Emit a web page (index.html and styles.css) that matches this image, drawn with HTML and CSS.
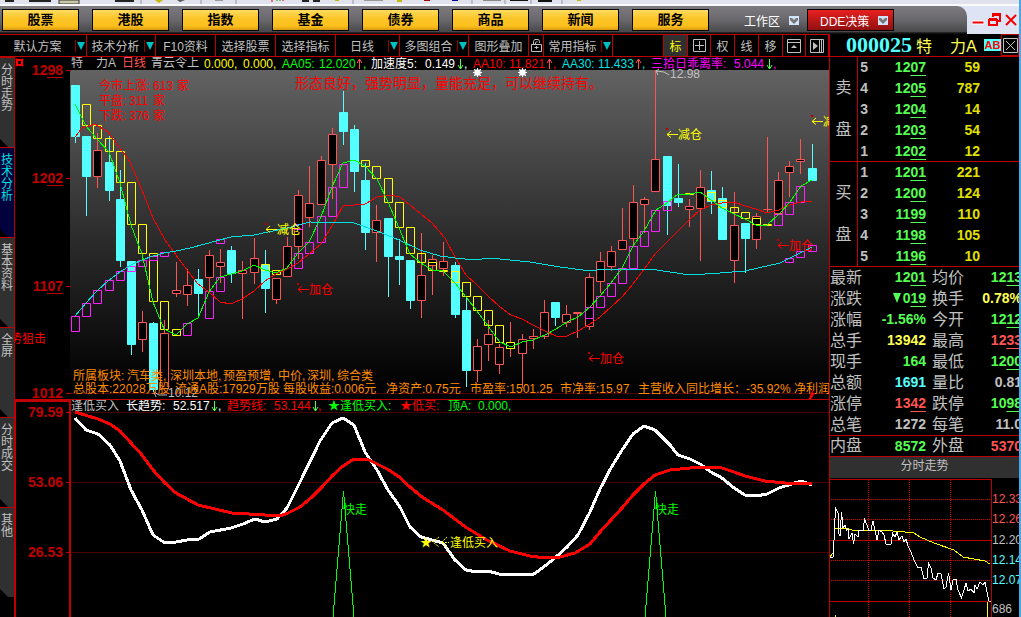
FILE: index.html
```
<!DOCTYPE html>
<html lang="zh-CN">
<head>
<meta charset="utf-8">
<title>000025 特力A</title>
<link rel="stylesheet" href="styles.css">
</head>
<body>
<div class="window">
  <header class="top">
    <div class="strip">
      <svg width="420" height="5" viewBox="0 0 420 5" aria-hidden="true">
        <path d="M5 0h9v2H5zM29 0h22v2H29zM115 0h19v2h-19z" fill="#222"/>
        <path d="M59 0h20v4H59z" fill="#c9c9a8" stroke="#333"/>
        <path d="M155 0h8l-4 3z" fill="#c8b800"/><path d="M177 0h8l-5 2z" fill="#555"/>
        <path d="M141 0v4M201 0v4M236 0v4M353 0v4" stroke="#999"/>
        <path d="M215 0h8v1h-8zM364 0h19v1h-19z" fill="#999"/>
        <path d="M272 0v2M283 0v1" stroke="#e00000"/><path d="M277 0v1M280 0v1" stroke="#00a000"/>
        <path d="M302 0h7v2h-7zM313 0h7v2h-7z" fill="#222"/><path d="M335 0h4v1h-4zM397 0h5v2h-5z" fill="#c8b800"/>
      </svg>
      <svg width="180" height="5" viewBox="0 0 180 5" aria-hidden="true">
        <path d="M4 0h6v1H4z" fill="#a00000"/><path d="M32 0h6v1h-6z" fill="#0000a0"/>
        <path d="M52 0v4M85 0v4M111 0v4M142 0v4" stroke="#999"/>
        <path d="M63 0h18v1H63z" fill="#888"/><path d="M90 0h18v1H90zM118 0h14v2h-14z" fill="#111"/>
        <path d="M157 0h4v1h-4z" fill="#c8b800"/>
      </svg>
    </div>
    <div class="nav-row">
      <nav class="nav">
        <button class="nav-btn">股票</button>
        <button class="nav-btn">港股</button>
        <button class="nav-btn">指数</button>
        <button class="nav-btn">基金</button>
        <button class="nav-btn">债券</button>
        <button class="nav-btn">商品</button>
        <button class="nav-btn">新闻</button>
        <button class="nav-btn">服务</button>
        <button class="menu-btn">工作区
          <svg width="10" height="9" viewBox="0 0 10 9" aria-hidden="true"><path d="M0 0h10v9H0z" fill="#cfe4fa"/><path d="M1 2h2l2 2 2-2h2v2L5 8 1 4z" fill="#777"/></svg>
        </button>
        <button class="menu-btn menu-red">DDE决策
          <svg width="10" height="9" viewBox="0 0 10 9" aria-hidden="true"><path d="M0 0h10v9H0z" fill="#cfe4fa"/><path d="M1 2h2l2 2 2-2h2v2L5 8 1 4z" fill="#777"/></svg>
        </button>
      </nav>
      <div class="win-controls">
        <button aria-label="最小化"><svg width="13" height="14" viewBox="0 0 13 14"><path d="M0 8h12v3H0z" fill="#f00000" stroke="#fff" stroke-width="1"/></svg></button>
        <button aria-label="还原"><svg width="14" height="14" viewBox="0 0 14 14"><path d="M5 4V2h7v6h-2M4 1h9M1 7h8v5H1zM1 6h8" fill="none" stroke="#f00000" stroke-width="2"/></svg></button>
        <button aria-label="关闭"><svg width="12" height="14" viewBox="0 0 12 14"><path d="M1 2l10 10M11 2L1 12" stroke="#f00000" stroke-width="2"/></svg></button>
      </div>
    </div>
  </header>

  <div class="work">
    <main class="main">
      <div class="toolbar">
        <button class="tool split w-86"><span>默认方案</span><i></i></button>
        <button class="tool split w-70"><span>技术分析</span><i></i></button>
        <button class="tool w-60">F10资料</button>
        <button class="tool w-60">选择股票</button>
        <button class="tool w-60">选择指标</button>
        <button class="tool split w-64"><span>日线</span><i></i></button>
        <button class="tool split w-70"><span>多图组合</span><i></i></button>
        <button class="tool w-60">图形叠加</button>
        <button class="tool w-15" aria-label="锁定"><svg width="11" height="15" viewBox="0 0 11 15"><path d="M.5 6.500h10v7H.5zM2.500 6V3.500l1-2h4l1 2V5M4.500 6V4.500l2-1M5.500 8v3M3.500 9.500h4" fill="none" stroke="#c0c0c0"/></svg></button>
        <button class="tool split w-70"><span>常用指标</span><i></i></button>
        <span class="spacer"></span>
        <button class="tool w-24 on">标</button>
        <button class="tool w-23" aria-label="十字"><svg width="13" height="13" viewBox="0 0 13 13"><path d="M.5 .5h12v12H.5zM6.500 2v9M2 6.500h9" fill="none" stroke="#c0c0c0"/></svg></button>
        <button class="tool w-24">权</button>
        <button class="tool w-24">线</button>
        <button class="tool w-24">移</button>
        <button class="tool w-23" aria-label="上翻"><svg width="14" height="14" viewBox="0 0 14 14"><path d="M.5 .5h13v13H.5zM0 3.500h14" fill="none" stroke="#c0c0c0"/><path d="M4 9l3-3 3 3z" fill="#c0c0c0"/></svg></button>
        <button class="tool w-23" aria-label="右移"><svg width="14" height="14" viewBox="0 0 14 14"><path d="M.5 .5h13v13H.5zM9.500 1v12M11.500 1v12" fill="none" stroke="#c0c0c0"/><path d="M3 3l5 4-5 4z" fill="#c0c0c0"/></svg></button>
      </div>
      <div class="body-row">
        <div class="tabs">
          <button class="tab"><span>分时走势</span></button>
          <button class="tab active"><span>技术分析</span></button>
          <button class="tab"><span>基本资料</span></button>
          <button class="tab"><span>全屏</span></button>
          <button class="tab"><span>分时成交</span></button>
          <button class="tab"><span>其他</span></button>
        </div>
        <div class="charts">
          <svg class="chart" viewBox="15 57 814 343">
            <defs>
              <linearGradient id="bg" x1="0" y1="0" x2="0" y2="1">
                <stop offset="0" stop-color="#626262"/><stop offset=".55" stop-color="#292929"/><stop offset="1" stop-color="#000"/>
              </linearGradient>
              <g id="dn"><path d="M2.500 -5v10" stroke="#54ff54"/><path d="M0 1l2.500 4L5 1" fill="none" stroke="#54ff54"/></g>
              <g id="up"><path d="M2.500 -5v10" stroke="#ff5454"/><path d="M0 -1l2.500 -4L5 -1" fill="none" stroke="#ff5454"/></g>
              <g id="mark"><path d="M0 .5h11M4 -3L0 .5l4 3" fill="none" stroke="currentColor"/><path d="M-1 -6h2v2h-2z" fill="#c00000"/></g>
            </defs>
            <rect x="70" y="70" width="759" height="320" fill="url(#bg)"/>
            <path d="M15 399.500h814" stroke="#c00000"/>
            <path d="M70 393.500h759" stroke="#500000"/>
            <path d="M66 70.500h5M66 178.500h5M66 286.500h5M66 393.500h5M47 77.500h16M47 185.500h16M47 293.500h16" stroke="#c00000"/>
            <path d="M17 60h5v5h-5zM16 59l1 1M23 59l-1 1M16 66l1-1M23 66l-1-1" fill="none" stroke="#ff0000" stroke-width="2"/>
            <g class="axis">
              <text x="63" y="75">1298</text><text x="63" y="183">1202</text><text x="63" y="291">1107</text><text x="63" y="398">1012</text>
            </g>
            <g class="txt">
              <text x="10" y="343" fill="#ff0000">势狙击</text>
              <text y="67" fill="#c0c0c0"><tspan x="71">特</tspan><tspan x="96">力A</tspan><tspan x="122" fill="#ff5454">日线</tspan><tspan x="151">青云令上</tspan></text>
              <text y="68" fill="#ffff00"><tspan x="204">0.000,</tspan><tspan x="243">0.000,</tspan></text>
              <text y="68" fill="#00ff00"><tspan x="282">AA05:</tspan><tspan x="319">12.020</tspan><tspan x="363">,</tspan></text>
              <text y="68" fill="#ffffff"><tspan x="371">加速度5:</tspan><tspan x="425">0.149</tspan><tspan x="464">,</tspan></text>
              <text y="68" fill="#ff0000"><tspan x="473">AA10:</tspan><tspan x="509">11.821</tspan><tspan x="553">,</tspan></text>
              <text y="68" fill="#00e0e0"><tspan x="562">AA30:</tspan><tspan x="598">11.433</tspan><tspan x="642">,</tspan></text>
              <text y="68" fill="#ff00ff"><tspan x="651">三拾日乖离率:</tspan><tspan x="734">5.044</tspan><tspan x="773">,</tspan></text>
            </g>
            <use href="#up" x="357" y="64"/><use href="#dn" x="458" y="64"/><use href="#up" x="547" y="64"/><use href="#up" x="636" y="64"/><use href="#dn" x="767" y="64"/>
            <g class="txt" fill="#ff0000">
              <text x="99" y="90">今市上涨:<tspan x="153">613</tspan> <tspan x="177">家</tspan></text>
              <text x="99" y="105">平盘:<tspan x="129">311</tspan> <tspan x="153">家</tspan></text>
              <text x="99" y="120">下跌:<tspan x="129">376</tspan> <tspan x="153">家</tspan></text>
              <text class="big" x="295" y="88">形态良好，强势明显，量能充足，可以继续持有。</text>
            </g>
            <g id="candles"></g>
            <path class="line" stroke="#ff0000" d="M75 137L82 128 95 124 108 132 120 148 130 162 142 190 153 218 165 240 176 255 187 270 198 284 209 292 220 302 231 304 242 299 254 291 265 281 276 274 287 269 298 263 309 254 321 244 332 226 343 206 354 205 365 204 377 197 390 195 400 197 410 205 432 223 445 238 455 257 466 275 477 285 488 296 500 307 511 315 522 319 533 325 545 331 556 336 567 336 578 331 590 324 600 317 611 307 622 297 633 284 645 268 655 254 690 219 700 210 711 205 722 203 734 202 745 206 756 209 767 213 779 210 790 205 801 202 812 201"/>
            <path class="line" stroke="#00e0e0" d="M75 316L86 303 97 291 109 280 120 272 131 265 142 260 153 256 164 253 176 251 190 248 205 244 231 237 254 235 287 228 310 222 354 223 377 231 399 240 420 250 440 256 455 258 475 260 490 258 530 262 560 267 590 271 605 269 650 269 690 275 720 273 745 271 780 263 812 247"/>
            <path class="line" stroke="#00ff00" d="M75 104L86 126 97 139 109 152 120 183 131 225 142 254 153 302 164 329 176 335 187 324 198 318 209 292 220 277 231 274 242 271 254 265 265 270 276 273 287 268 298 253 309 242 321 217 332 187 343 163 354 160 365 166 377 179 388 202 399 228 410 254 421 263 432 270 443 271 455 283 466 297 477 311 488 326 500 342 511 347 522 342 533 340 545 335 556 329 567 322 578 317 590 307 600 296 611 283 622 268 633 246 644 231 656 210 667 203 678 194 690 194 700 192 711 200 722 208 734 214 745 219 756 225 767 225 779 214 790 202 801 186 812 180"/>
            <g class="txt" fill="#ffff00" color="#ffff00">
              <use href="#mark" x="266" y="229"/><text x="277" y="234">减仓</text>
              <use href="#mark" x="667" y="134"/><text x="678" y="139">减仓</text>
              <use href="#mark" x="812" y="121"/><text x="823" y="126">减仓</text>
            </g>
            <g class="txt" fill="#ff0000" color="#ff0000">
              <use href="#mark" x="298" y="289"/><text x="309" y="294">加仓</text>
              <use href="#mark" x="589" y="358"/><text x="600" y="363">加仓</text>
              <use href="#mark" x="778" y="245"/><text x="789" y="250">加仓</text>
            </g>
            <g class="txt" fill="#c0c0c0">
              <path d="M656 71l8 1 5 3M659 69l-3 2 2 4M154 392l5 3h8M156 397l-2-5" fill="none" stroke="#c0c0c0"/>
              <text x="670" y="78">12.98</text><text x="168" y="397">10.12</text>
            </g>
            <path d="M475 70h5v5h-5zM520 70h5v5h-5z" fill="#fff" stroke="#fff"/>
            <path d="M474 69l7 7M481 69l-7 7M519 69l7 7M526 69l-7 7M477.500 68v9M522.500 68v9M473 72.500h9M518 72.500h9" stroke="#fff"/>
            <g class="txt" fill="#ff8c00">
              <text y="380"><tspan x="73">所属板块:</tspan><tspan x="127">汽车类,</tspan><tspan x="170">深圳本地,</tspan><tspan x="223">预盈预增,</tspan><tspan x="278">中价,</tspan><tspan x="307">深圳,</tspan><tspan x="337">综合类</tspan></text>
              <text y="393"><tspan x="73">总股本:22028万股</tspan><tspan x="175">流通A股:17929万股</tspan><tspan x="283">每股收益:0.006元</tspan><tspan x="386">净资产:0.75元</tspan><tspan x="470">市盈率:1501.25</tspan><tspan x="560">市净率:15.97</tspan><tspan x="638">主营收入同比增长：-35.92%</tspan><tspan x="794">净利润</tspan></text>
            </g>
            <path d="M809 399l2-6 3-4-1 4 2 0-4 6z" fill="#ff0000"/>
          </svg>
          <svg class="chart" viewBox="15 400 814 217">
            <path d="M70 412.500h759M70 482.500h759M70 552.500h759" stroke="#480000"/>
            <path d="M15 401h56" stroke="#c00000" stroke-width="2"/><path d="M70 400v217" stroke="#c00000" stroke-width="2"/>
            <path d="M66 412.500h5M66 482.500h5M66 552.500h5M15.500 400v217" stroke="#c00000"/>
            <g class="axis"><text x="63" y="417">79.59</text><text x="63" y="487">53.06</text><text x="63" y="557">26.53</text></g>
            <path d="M333 617L343.500 491 354 617M645 617L655.500 491 666 617" class="line" stroke="#00ff00"/>
            <path class="thick" stroke="#fff" d="M75 418L86 430 98 434 110 445 120 461 131 490 142 510 153 535 165 543 176 542 187 540 199 539 210 532 231 528 243 524 255 519 265 522 277 519 287 508 300 482 320 441 332 423 343 418 354 425 365 452 377 470 388 490 400 507 410 527 421 537 443 543 455 560 466 570 477 572 488 571 499 574 534 574 545 566 556 557 567 547 578 535 590 512 600 489 611 468 622 450 633 434 644 426 655 430 670 445 678 455 690 459 700 464 711 472 722 478 734 488 745 495 756 496 767 494 779 488 801 481 812 485"/>
            <path class="thick" stroke="#ff0000" d="M75 412L98 419 110 424 120 431 142 455 153 470 165 483 176 493 198 505 232 513 265 515 280 516 288 513 300 507 312 497 322 487 333 475 343 466 354 459 367 459 387 469 398 476 410 487 422 497 443 510 467 528 487 540 510 551 530 556 545 558 560 557 575 553 590 544 600 532 611 520 622 508 633 495 644 484 655 475 670 470 690 468 705 467 722 468 734 472 745 476 765 481 785 483 812 483"/>
            <g class="txt">
              <text y="410" fill="#c0c0c0"><tspan x="71">逢低买入</tspan></text>
              <text y="410" fill="#fff"><tspan x="126">长趋势:</tspan><tspan x="173">52.517</tspan><tspan x="218">,</tspan></text>
              <text y="410" fill="#f00"><tspan x="227">趋势线:</tspan><tspan x="274">53.144</tspan><tspan x="318">,</tspan></text>
              <text y="410" fill="#0f0"><tspan x="328">★逢低买入:</tspan></text>
              <text y="410" fill="#f00"><tspan x="400">★低买:</tspan></text>
              <text y="410" fill="#0f0"><tspan x="448">顶A:</tspan><tspan x="478">0.000,</tspan></text>
              <text x="343" y="514" fill="#0f0">快走</text><text x="655" y="514" fill="#0f0">快走</text>
              <text y="547" fill="#ff0"><tspan x="420">★</tspan><tspan x="450">逢低买入</tspan></text>
            </g>
            <path d="M439 537l-6 5 6 5M447 537l-5 5 5 5M442 542.500h7" fill="none" stroke="#ffff00" stroke-dasharray="2 1"/>
            <use href="#dn" x="212" y="406"/><use href="#dn" x="313" y="406"/>
          </svg>
        </div>
      </div>
    </main>

    <aside class="side">
      <div class="symbol">
        <strong class="code">000025</strong><span class="name">特</span><span class="name">力A</span><span class="badge">AB</span>
        <button class="close" aria-label="关闭"><svg width="15" height="15" viewBox="0 0 15 15"><path d="M.5 .5h14v14H.5zM3 3l9 9M12 3l-9 9" fill="none" stroke="#c0c0c0"/></svg></button>
      </div>
      <table class="book">
        <tr><th rowspan="5">卖<br>盘</th><td class="lv">5</td><td class="px">12<u>07</u></td><td class="vol">59</td><td></td></tr>
        <tr><td class="lv">4</td><td class="px">12<u>05</u></td><td class="vol">787</td><td></td></tr>
        <tr><td class="lv">3</td><td class="px">12<u>04</u></td><td class="vol">14</td><td></td></tr>
        <tr><td class="lv">2</td><td class="px">12<u>03</u></td><td class="vol">54</td><td></td></tr>
        <tr><td class="lv">1</td><td class="px">12<u>02</u></td><td class="vol">12</td><td></td></tr>
      </table>
      <table class="book">
        <tr><th rowspan="5">买<br>盘</th><td class="lv">1</td><td class="px">12<u>01</u></td><td class="vol">221</td><td></td></tr>
        <tr><td class="lv">2</td><td class="px">12<u>00</u></td><td class="vol">124</td><td></td></tr>
        <tr><td class="lv">3</td><td class="px">11<u>99</u></td><td class="vol">110</td><td></td></tr>
        <tr><td class="lv">4</td><td class="px">11<u>98</u></td><td class="vol">105</td><td></td></tr>
        <tr><td class="lv">5</td><td class="px">11<u>96</u></td><td class="vol">10</td><td></td></tr>
      </table>
      <dl class="stats">
        <dt>最新</dt><dd class="g">12<u>01</u></dd><dt>均价</dt><dd class="g">12<u>13</u></dd>
        <dt>涨跌</dt><dd class="g"><span class="tri"></span>0<u>19</u></dd><dt>换手</dt><dd class="y">0.78%</dd>
        <dt>涨幅</dt><dd class="g">-1.56%</dd><dt>今开</dt><dd class="g">12<u>12</u></dd>
        <dt>总手</dt><dd class="y">13942</dd><dt>最高</dt><dd class="r">12<u>33</u></dd>
        <dt>现手</dt><dd class="g">164</dd><dt>最低</dt><dd class="g">12<u>00</u></dd>
        <dt>总额</dt><dd class="c">1691</dd><dt>量比</dt><dd>0.81</dd>
        <dt>涨停</dt><dd class="r">13<u>42</u></dd><dt>跌停</dt><dd class="g">10<u>98</u></dd>
        <dt>总笔</dt><dd>1272</dd><dt>每笔</dt><dd>11.0</dd>
      </dl>
      <dl class="stats last">
        <dt>内盘</dt><dd class="g">8572</dd><dt>外盘</dt><dd class="r">5370</dd>
      </dl>
      <h2 class="mini-title">分时走势</h2>
      <svg class="mini" viewBox="830 478 189 139">
        <path d="M830 479.500h161.500V617M830 540.500h161M830 601.500h161" fill="none" stroke="#c00000"/>
        <path d="M831 499.500h160M831 519.500h160M831 560.500h160M831 580.500h160M868.500 480v137M909.500 480v137M950.500 480v137" stroke="#e00000" stroke-dasharray="1 1" shape-rendering="crispEdges"/>
        <path class="line" d="M830 557L833 553 835 528 845 528 852 530 880 530 905 532 914 533 920 537 934 543 954 550 963 557 985 561 990 564M987.500 602v15M835.500 615v2" stroke="#ffff00"/>
        <path class="line" d="M830 557.500L833 557 834 540 835.500 508 838 513 839 534 840 536 841.500 512 843 528 845 525 846.500 530 848 529 849 539 852 533 853.500 544 855 534 858 537 859 530 863 531 864.500 519 867 525 869 531 871 530 873 521 875 530 877 540 879 530 882 532 884 535 886 544 891 544 892.500 533 895 537 897 532 899 540 902 536 904 542 906 539 908 546 911 552 914 560 918 568 921 567 924 579 927 578 928.500 563 931 568 933 578 936 580 938 573 941 574 944 589 946 587 948.500 573 951 590 953 580 956 579 958 590 961.500 598 964 590 966 583 968 591 971 589 974 593 975 585 977 589 980 582 983 585 985 582 987 592 989 601 991 601" stroke="#fff"/>
        <g class="txt">
          <text x="992" y="503" fill="#ff5454">12.33</text><text x="992" y="523" fill="#ff5454">12.26</text><text x="992" y="544" fill="#c0c0c0">12.20</text><text x="992" y="564" fill="#54ffff">12.14</text><text x="992" y="584" fill="#54ffff">12.07</text><text x="992" y="613" fill="#c0c0c0">686</text>
        </g>
      </svg>
    </aside>
  </div>
</div>
<script src="chart.js"></script>
</body>
</html>
```

FILE: styles.css
```
* { box-sizing: border-box; }
body { margin: 0; background: #000; color: #c0c0c0; font: 12px "Liberation Sans", "Noto Sans CJK SC", sans-serif; overflow: hidden; }
button { font: inherit; color: inherit; background: none; border: 0; padding: 0; margin: 0; }
svg { display: block; flex: none; }
.window { min-height: 100vh; border-right: 2px solid #4aa8e8; display: flex; flex-direction: column; }

.strip { height: 6px; background: #e0e2ee; border-bottom: 2px solid #f8fafc; display: flex; overflow: hidden; }
.nav-row { display: flex; height: 28px; background: #dfe4f4; }
.nav { flex: 1; display: flex; align-items: center; gap: 13px; padding-left: 2px; background: linear-gradient(#7d7b80, #68676b 50%, #48484a 92%, #111 96%); border-radius: 0 10px 0 0; }
.nav-btn { width: 77px; height: 22px; border: 1px solid #000; background: linear-gradient(#ffdc60, #fcc62a 40%, #fdc01c 80%, #d89a10); color: #000; font-size: 13px; font-weight: bold; line-height: 18px; }
.menu-btn { display: flex; align-items: center; gap: 9px; color: #fff; height: 22px; padding: 0 0 0 22px; }
.menu-red { width: 87px; padding: 0 5px 0 12px; justify-content: space-between; margin-left: -5px; border: 1px solid #000; background: linear-gradient(#e82020, #901010); white-space: nowrap; }
.win-controls { display: flex; align-items: center; gap: 3px; padding: 0 2px 0 5px; }

.work { flex: 1; display: flex; }
.main { flex: 1; min-width: 0; }
.toolbar { display: flex; height: 23px; border-top: 1px solid #c00000; border-bottom: 1px solid #c00000; overflow: hidden; }
.tool { display: flex; align-items: center; justify-content: center; border-right: 1px solid #c00000; white-space: nowrap; flex: none; }
.split span { flex: 1; }
.split i { width: 11px; height: 12px; border-left: 1px solid #900000; display: flex; align-items: center; justify-content: center; }
.split i::before { content: ""; border: 4px solid transparent; border-top: 8px solid #00c0c0; border-bottom: 0; }
.spacer { flex: 1; border-right: 1px solid #c00000; }
.w-86 { width: 87px; }
.w-70 { width: 69px; }
.w-64 { width: 64px; }
.w-60 { width: 60px; }
.w-24 { width: 24px; }
.w-23 { width: 23px; }
.w-15 { width: 15px; }
.on { color: #ffff00; background: #303030; }

.body-row { display: flex; }
.tabs { width: 15px; border-right: 1px solid #c00000; }
.tab { display: block; width: 14px; height: 90px; background: #303030; border-top: 1px solid #c00000; line-height: 12px; clip-path: polygon(0 0, 100% 0, 100% 100%, 8px 100%, 0 82px); }
.tab span { display: block; width: 12px; height: 78px; margin-left: 1px; white-space: normal; word-break: break-all; }
.tab.active { background: #00003c; color: #00e0e0; }
.charts { flex: 1; min-width: 0; }
.chart, .mini { width: 100%; height: auto; }
.txt { font-size: 12px; }
.txt .big { font-size: 14px; }
.axis { font-size: 14px; font-weight: bold; fill: #c00000; text-anchor: end; }
.line { fill: none; stroke-width: 1; shape-rendering: crispEdges; }
.thick { fill: none; stroke-width: 3; stroke-linejoin: round; shape-rendering: crispEdges; }
.up { fill: #000; stroke: #ff5454; }
.down { fill: #54ffff; stroke: #54ffff; }
.box-y { fill: none; stroke: #ffff00; }
.box-m { fill: none; stroke: #ff20ff; }

.side { width: 190px; border-left: 1px solid #c00000; overflow: hidden; }
.symbol { display: flex; align-items: center; height: 23px; padding-left: 16px; border-bottom: 1px solid #c00000; color: #ffff54; }
.code { font: bold 22px/22px "Liberation Serif", serif; color: #54ffff; width: 70px; }
.name { font-size: 16px; width: 34px; white-space: nowrap; }
.badge { width: 17px; background: #54ffff; color: #ff0000; font-size: 11px; font-weight: bold; line-height: 12px; text-align: center; }
.close { height: 22px; width: 18px; border: 1px solid #c00000; display: flex; align-items: center; justify-content: center; }
u { text-underline-offset: 3px; text-decoration-thickness: 1px; }
.book { width: 100%; height: 105px; border-spacing: 0; border-bottom: 1px solid #c00000; table-layout: fixed; font-size: 14px; font-weight: bold; }
.book th { width: 28px; padding: 0; border-right: 1px solid #c00000; font-size: 16px; font-weight: normal; line-height: 42px; }
.book td { padding: 0; line-height: 20px; text-align: right; }
.book .lv { width: 10px; }
.book .px { width: 58px; color: #54ff54; }
.book .vol { width: 54px; color: #e0e000; }
.stats { margin: 0; display: grid; grid-template-columns: 33px 63px 38px 58px; font-size: 16px; line-height: 21px; border-bottom: 1px solid #c00000; }
.stats dt:nth-of-type(even) { padding-left: 6px; }
.stats dd { margin: 0; text-align: right; font-size: 14px; font-weight: bold; white-space: nowrap; }
.stats.last { line-height: 20px; }
.tri { display: inline-block; border: 4px solid transparent; border-top: 10px solid #54ff54; border-bottom: 0; margin-right: 2px; }
.g { color: #54ff54; }
.y { color: #ffff54; }
.r { color: #ff5454; }
.c { color: #54ffff; }
.mini-title { margin: 0; height: 21px; background: #303030; font-size: 12px; font-weight: normal; line-height: 19px; text-align: center; }
```

FILE: chart.js
```
// Each candle: x, direction (1 rising, 0 falling), high, body top, body bottom, low
const candles = [
  [71,0,85,85,137,143],[82,0,136,136,177,216],[93,1,133,150,177,188],[105,0,136,162,191,201],
  [116,0,170,199,261,267],[127,0,261,261,345,355],[138,1,311,322,340,352],[149,0,322,323,390,392],
  [160,1,320,333,389,389],[172,1,262,290,294,297],[183,1,269,285,295,306],[194,0,269,279,294,318],
  [205,1,250,255,278,292],[216,1,249,262,267,283],[227,0,246,250,274,283],[238,1,261,270,274,319],
  [250,1,238,258,273,284],[261,0,250,265,289,313],[272,1,278,278,300,304],[283,1,237,246,277,277],
  [294,1,190,195,247,259],[305,1,166,203,218,227],[317,1,156,160,205,205],[328,1,128,134,165,199],
  [339,0,91,112,132,145],[350,0,125,129,172,192],[361,0,163,180,233,250],[372,1,205,220,233,262],
  [384,0,218,218,257,297],[395,0,239,256,260,285],[406,0,260,260,301,309],[417,1,233,275,301,318],
  [428,1,255,259,266,295],[439,1,242,261,269,276],[451,0,262,265,315,318],[462,0,297,310,371,387],
  [473,1,339,346,371,382],[484,1,320,334,345,361],[495,1,344,347,365,374],[506,1,322,342,349,357],
  [518,1,334,339,354,388],[529,1,329,336,339,349],[540,1,300,312,337,339],[551,0,302,302,318,326],
  [562,1,305,314,323,327],[573,1,312,312,314,338],[585,1,273,277,327,330],[596,1,252,261,282,293],
  [607,1,246,251,267,271],[618,1,208,240,250,250],[629,1,185,202,239,246],[640,1,197,199,205,233],
  [651,1,70,159,192,192],[663,0,156,156,206,235],[674,0,164,198,203,207],[685,1,199,206,210,227],
  [696,1,170,187,209,261],[707,0,171,190,202,214],[718,0,187,198,240,240],[730,1,192,225,261,283],
  [741,0,223,223,239,273],[752,1,213,216,240,249],[763,1,137,209,210,212],[774,1,172,180,214,214],
  [785,1,161,166,173,197],[796,1,139,159,162,174],[808,0,144,168,181,181]
];
// Boxes following the averages: x, top, bottom
const yellow = [
  [82,104,126],[93,125,139],[105,138,152],[116,151,183],[127,182,225],[138,224,254],[149,253,302],
  [160,301,330],[172,329,336],[261,264,271],[272,270,275],[361,160,167],[372,166,179],[384,178,203],
  [395,202,228],[406,227,254],[417,253,263],[428,262,271],[439,270,272],[451,271,283],[462,282,297],
  [473,296,311],[484,310,326],[495,325,343],[506,342,349],[685,193,195],[707,192,201],[718,200,208],
  [730,207,213],[741,212,219],[752,218,225],[763,224,226]
];
const magenta = [
  [71,316,332],[82,303,317],[93,290,304],[105,280,291],[116,271,281],[127,266,272],[138,260,267],
  [149,256,261],[160,252,257],[216,239,244],[183,323,336],[205,291,319],[216,277,292],[294,224,230],
  [294,253,269],[305,242,254],[317,216,243],[328,187,217],[339,164,188],[585,307,319],[596,296,308],
  [607,283,297],[618,268,284],[629,246,269],[640,231,247],[651,210,232],[663,201,211],[774,214,226],
  [785,202,215],[796,186,203],[785,258,263],[796,251,258],[808,245,252]
];
const box = (x, t, b) => `M${x + 0.5} ${t + 0.5}h8v${Math.max(b - t - 1, 0)}h-8z`;
const path = (cls, d) => `<path class="${cls}" d="${d}"/>`;
let out = "";
for (const [x, up, hi, top, bot, lo] of candles) {
  const cls = up ? "up" : "down";
  out += path(cls, `M${x + 4.5} ${hi}V${lo}`) + path(cls, box(x, top, bot));
}
out += path("box-y", yellow.map(b => box(...b)).join(""));
out += path("box-m", magenta.map(b => box(...b)).join(""));
document.getElementById("candles").innerHTML = out;
```
